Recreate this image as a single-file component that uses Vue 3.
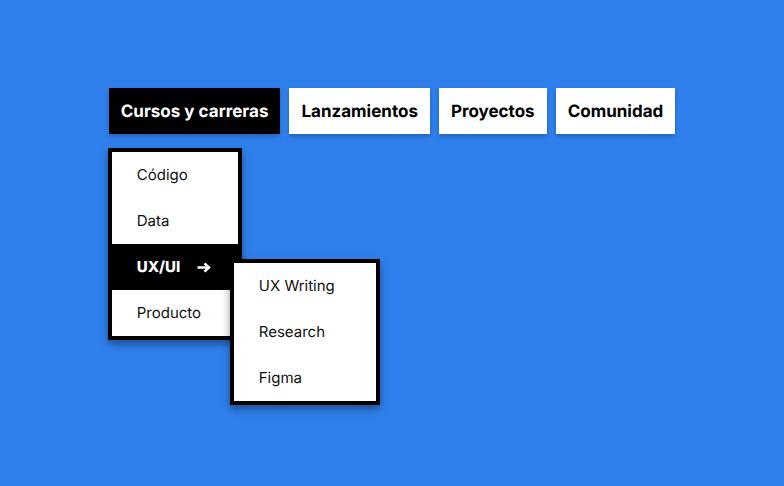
<script setup>
const sections = ['Lanzamientos', 'Proyectos', 'Comunidad']
const uxItems = ['UX Writing', 'Research', 'Figma']
</script>

<template>
  <main class="page">
    <nav class="nav" aria-label="Principal">
      <div class="group">
        <button class="tab active" type="button" aria-expanded="true">Cursos y carreras</button>
        <div class="menu">
          <a class="item" href="#codigo">Código</a>
          <a class="item" href="#data">Data</a>
          <div class="group">
            <button class="item current" type="button" aria-expanded="true">
              UX/UI
              <svg class="arrow" viewBox="0 0 14 12" aria-hidden="true">
                <path d="M0.5 6.5H12M7.5 2.3L12 6.5L7.5 10.7" />
              </svg>
            </button>
            <div class="menu submenu">
              <a v-for="item in uxItems" :key="item" class="item" :href="'#' + item">{{ item }}</a>
            </div>
          </div>
          <a class="item" href="#producto">Producto</a>
        </div>
      </div>
      <a v-for="section in sections" :key="section" class="tab" :href="'#' + section">{{ section }}</a>
    </nav>
  </main>
</template>

<style>
body {
  margin: 0;
  background: #2f80ed;
}
</style>

<style scoped>
.page {
  box-sizing: border-box;
  min-height: 100vh;
  padding: 88px 48px;
  font-family: Inter, sans-serif;
  text-rendering: geometricPrecision;
}
.nav {
  display: flex;
  justify-content: center;
  align-items: flex-start;
  gap: 9px;
}
.group {
  position: relative;
}
.tab {
  display: block;
  box-sizing: border-box;
  height: 46px;
  padding: 2px 12px 0;
  border: 0;
  background: #fff;
  color: #000;
  font: 700 17px/44px Inter, sans-serif;
  text-decoration: none;
  text-rendering: inherit;
  white-space: nowrap;
  box-shadow: 0 2px 4px rgba(0, 0, 0, 0.25);
}
.active {
  background: #000;
  color: #fff;
}
.menu {
  position: absolute;
  top: 60px;
  left: -1px;
  box-sizing: border-box;
  width: 134px;
  border: 4px solid #000;
  background: #fff;
  box-shadow: 0 4px 8px rgba(0, 0, 0, 0.4);
}
.item {
  display: flex;
  align-items: center;
  box-sizing: border-box;
  width: 100%;
  height: 46px;
  padding: 0 25px;
  border: 0;
  color: #111;
  font: 400 15px/46px Inter, sans-serif;
  text-decoration: none;
  text-rendering: inherit;
  white-space: nowrap;
}
.current {
  gap: 17px;
  background: #000;
  color: #fff;
  font-weight: 800;
}
.arrow {
  flex: none;
  width: 14px;
  height: 12px;
  fill: none;
  stroke: currentColor;
  stroke-width: 2.5;
}
.submenu {
  top: 15px;
  left: 118px;
  width: 150px;
}
</style>
